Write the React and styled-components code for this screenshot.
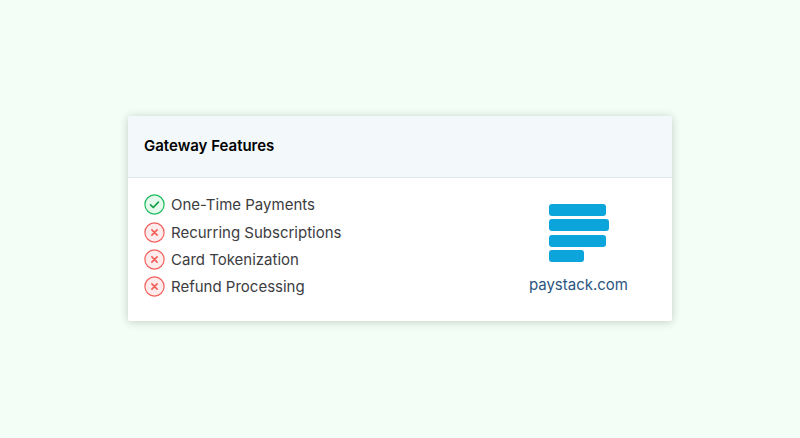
import React from "react";
import styled, { createGlobalStyle } from "styled-components";

const features = [
  { name: "One-Time Payments", supported: true },
  { name: "Recurring Subscriptions", supported: false },
  { name: "Card Tokenization", supported: false },
  { name: "Refund Processing", supported: false },
];

const StatusIcon = ({ supported }) => {
  const color = supported ? "#1cbc5c" : "#f2605c";
  return (
    <svg width="21" height="21" viewBox="0 0 21 21" fill="none">
      <circle
        cx="10.5"
        cy="10.5"
        r="9.6"
        fill={supported ? "#e6f9ed" : "#feecec"}
        stroke={color}
        strokeWidth="1.2"
      />
      {supported ? (
        <path
          d="M6.6 10.8l2.7 2.7 5.1-5.4"
          stroke="#12a04a"
          strokeWidth="1.7"
          strokeLinecap="round"
          strokeLinejoin="round"
        />
      ) : (
        <path
          d="M7.9 7.9l5.2 5.2M13.1 7.9l-5.2 5.2"
          stroke={color}
          strokeWidth="1.7"
          strokeLinecap="round"
        />
      )}
    </svg>
  );
};

const App = () => {
  return (
    <>
      <GlobalStyle />
      <Page>
        <Card>
          <CardHeader>
            <Title>Gateway Features</Title>
          </CardHeader>
          <CardBody>
            <FeatureList>
              {features.map((feature) => (
                <Feature key={feature.name}>
                  <StatusIcon supported={feature.supported} />
                  {feature.name}
                </Feature>
              ))}
            </FeatureList>
            <Gateway>
              <LogoBars>
                <LogoBar $width={57} />
                <LogoBar $width={60} />
                <LogoBar $width={57} />
                <LogoBar $width={35} />
              </LogoBars>
              <Domain>paystack.com</Domain>
            </Gateway>
          </CardBody>
        </Card>
      </Page>
    </>
  );
};

const GlobalStyle = createGlobalStyle`
  body {
    margin: 0;
    background: #f3fef6;
    font-family: Inter, "Liberation Sans", sans-serif;
  }
`;

const Page = styled.div`
  height: 438px;
  display: flex;
  align-items: center;
  justify-content: center;
  padding-bottom: 1.5px;
  box-sizing: border-box;
`;

const Card = styled.div`
  width: 544px;
  background: #fff;
  border-radius: 2px;
  box-shadow: 0 1px 10px rgba(0, 0, 0, 0.2);
`;

const CardHeader = styled.div`
  height: 59px;
  padding: 0 16px 2px;
  display: flex;
  align-items: center;
  background: #f3f8fb;
  border-bottom: 1px solid #e1e6ea;
`;

const Title = styled.h3`
  margin: 0;
  font-size: 15px;
  font-weight: 600;
  color: #000;
`;

const CardBody = styled.div`
  height: 142.5px;
  padding: 13.2px 44px 0 16px;
  box-sizing: border-box;
  display: flex;
  justify-content: space-between;
  align-items: flex-start;
`;

const FeatureList = styled.ul`
  margin: 0;
  padding: 0;
  list-style: none;
`;

const Feature = styled.li`
  height: 27.3px;
  display: flex;
  align-items: center;
  gap: 6px;
  font-size: 15px;
  color: #3c3c41;
`;

const Gateway = styled.div`
  display: flex;
  flex-direction: column;
  align-items: center;
  padding-top: 12.8px;
`;

const LogoBars = styled.div`
  width: 60px;
  margin-left: 1px;
  display: flex;
  flex-direction: column;
  gap: 3.5px;
`;

const LogoBar = styled.div`
  width: ${(props) => props.$width}px;
  height: 12px;
  border-radius: 3px;
  background: #0ba4db;
`;

const Domain = styled.div`
  margin-top: 12.5px;
  font-size: 15px;
  color: #2b5680;
`;

export default App;
